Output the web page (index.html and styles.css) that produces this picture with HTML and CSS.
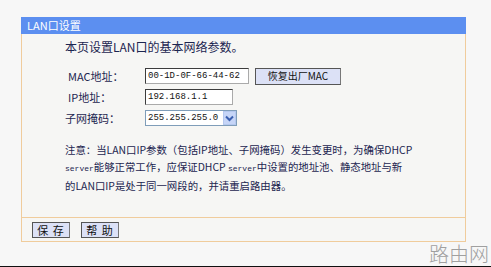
FILE: index.html
```html
<!DOCTYPE html>
<html lang="zh-CN">
<head>
  <meta charset="UTF-8">
  <meta name="viewport" content="width=device-width, initial-scale=1.0">
  <title>LAN口设置</title>
  <link rel="stylesheet" href="styles.css">
</head>
<body>
  <div class="frame">
    <div class="panel">
      <div class="panel-title">LAN口设置</div>

      <div class="panel-body">
        <p class="intro">本页设置LAN口的基本网络参数。</p>

        <div class="form">
          <div class="row">
            <label class="label">MAC地址：</label>
            <input class="field field-mac" type="text" value="00-1D-0F-66-44-62">
            <button class="btn btn-mac">恢复出厂MAC</button>
          </div>
          <div class="row">
            <label class="label">IP地址：</label>
            <input class="field field-ip" type="text" value="192.168.1.1">
          </div>
          <div class="row">
            <label class="label label-mask">子网掩码：</label>
            <div class="select">
              <span class="select-value">255.255.255.0</span>
              <span class="select-arrow">
                <svg width="9" height="7" viewBox="0 0 9 7"><path d="M1 1.5 L4.5 5 L8 1.5" fill="none" stroke="#3a5fb0" stroke-width="2"/></svg>
              </span>
            </div>
          </div>
        </div>

        <p class="note">注意：当LAN口IP参数（包括IP地址、子网掩码）发生变更时，为确保DHCP<br><span class="small">server</span>能够正常工作，应保证DHCP <span class="small">server</span>中设置的地址池、静态地址与新<br>的LAN口IP是处于同一网段的，并请重启路由器。</p>
      </div>

      <div class="panel-foot">
        <button class="btn btn-foot">保&nbsp;存</button>
        <button class="btn btn-foot">帮&nbsp;助</button>
      </div>
    </div>

    <div class="watermark">路由网</div>
  </div>
</body>
</html>
```

FILE: styles.css
```css
* {
  margin: 0;
  padding: 0;
  box-sizing: border-box;
}

body {
  font-family: 'Noto Sans CJK SC', sans-serif;
  background-color: #f7f7f7;
  color: #1c2550;
}

.frame {
  position: relative;
  height: 267px;
  padding: 17px 0 0 21px;
  border-bottom: 1px solid #111;
}

.panel {
  width: 445px;
  border: 1px solid #f0cc9c;
  border-top: none;
  background-color: #f6f6f4;
}

.panel-title {
  height: 17px;
  margin: 0 -1px;
  padding-left: 6px;
  background-color: #5c8ff0;
  color: white;
  font-size: 11px;
  line-height: 17px;
}

.panel-body {
  height: 184px;
  padding: 5px 0 0 43px;
  border-bottom: 1px solid #f0cc9c;
}

.intro {
  font-size: 12px;
  line-height: 16px;
}

.form {
  display: flex;
  flex-direction: column;
  gap: 5px;
  margin-top: 13px;
}

.row {
  display: flex;
  align-items: center;
  height: 16px;
}

.label {
  width: 80px;
  padding-left: 3px;
  font-size: 11px;
}

.label-mask {
  padding-left: 0;
}

.field {
  height: 16px;
  border: 1px solid #3c3c3c;
  border-right-color: #aaa;
  border-bottom-color: #aaa;
  background-color: white;
  padding-left: 2px;
  font-family: 'Liberation Mono', monospace;
  font-size: 9px;
  color: #111;
}

.field-mac {
  width: 104px;
}

.field-ip {
  width: 88px;
}

.btn {
  background-color: #dce1f6;
  border: 1px solid #555;
  border-right-color: #777;
  font-family: 'Noto Sans CJK SC', sans-serif;
  color: #111;
}

.btn-mac {
  width: 86px;
  height: 17px;
  margin-left: 6px;
  font-size: 10px;
  line-height: 14px;
}

.select {
  display: flex;
  align-items: center;
  width: 92px;
  height: 16px;
  border: 1px solid #7f9db9;
  background-color: white;
  font-family: 'Liberation Mono', monospace;
  font-size: 9px;
  color: #111;
}

.select-value {
  flex: 1;
  padding-left: 2px;
}

.select-arrow {
  display: flex;
  align-items: center;
  justify-content: center;
  width: 13px;
  height: 14px;
  background-color: #c6d5f7;
  border: 1px solid #b5c8ef;
}

.note {
  margin-top: 15px;
  font-size: 10.4px;
  line-height: 17px;
  white-space: nowrap;
}

.note .small {
  font-family: 'Liberation Mono', monospace;
  font-size: 8px;
}

.panel-foot {
  display: flex;
  align-items: center;
  gap: 11px;
  height: 23px;
  padding-left: 10px;
}

.btn-foot {
  width: 38px;
  height: 16px;
  font-size: 11px;
  line-height: 14px;
  letter-spacing: 1px;
}

.watermark {
  position: absolute;
  right: 2px;
  bottom: 1px;
  font-size: 20px;
  line-height: 22px;
  color: #a0a0a0;
  font-weight: 300;
}
```
